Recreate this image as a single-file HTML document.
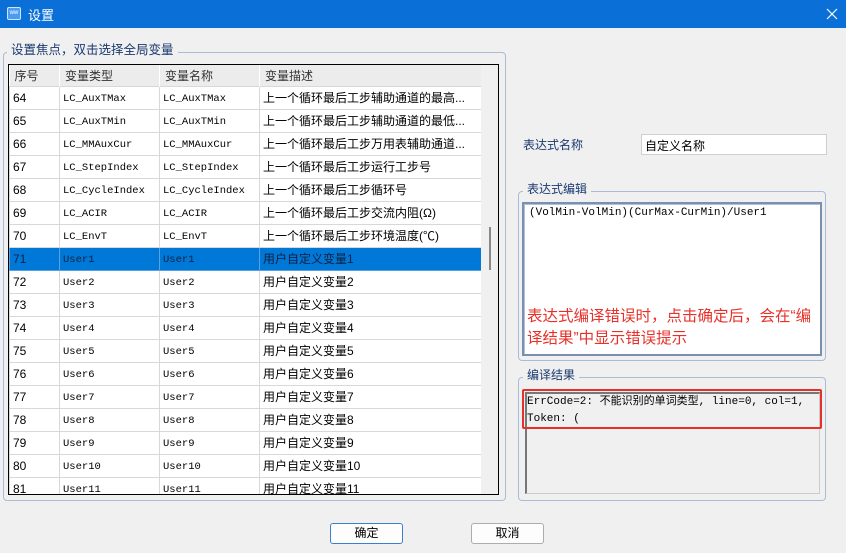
<!DOCTYPE html>
<html><head><meta charset="utf-8"><style>
*{margin:0;padding:0;box-sizing:border-box}
body{width:846px;height:553px;background:#f0f0f0;position:relative;overflow:hidden;font-family:"Liberation Sans","Noto Sans CJK SC",sans-serif;font-size:12px;color:#000}
.a{position:absolute}
.title{left:0;top:0;width:846px;height:28px;background:#0a6fd6;color:#fff}
.grp{border:1px solid #a8bcd8;border-radius:4px}
.lg{background:#f0f0f0;padding:0 4px;color:#1a3a70;font-size:12px}
.mono{font-family:"Liberation Mono","Noto Sans CJK SC",monospace;font-size:11px}
table{border-collapse:collapse;table-layout:fixed}
td{height:23px;border:1px solid #d8d8d8;padding:0 3px;white-space:nowrap;overflow:hidden;background:#fff;vertical-align:top;font-size:12px}
td div{height:22px;line-height:22px;overflow:hidden}
td .m{font-family:"Liberation Mono",monospace;font-size:10.5px;padding-top:3px;line-height:19px}
th{height:21px;background:#ececec;font-weight:normal;text-align:left;padding:0 5px;border-right:1px solid #fff;color:#333}
tr.sel td{background:#0078d7;border-color:#5aa0e0;color:#102040}
.btn{border:1px solid #adadad;border-radius:3px;background:#fdfdfd;text-align:center;line-height:19px;font-size:12px}
</style></head><body>
<div class="a title">
  <div class="a" style="left:7px;top:7px;width:14px;height:13px;border:1px solid #cfe6ff;background:#4b9cf0;border-radius:2px;font-size:6px;line-height:11px;text-align:center;color:#fff">ww</div>
  <div class="a" style="left:28px;top:5px;font-size:13px">设置</div>
  <svg class="a" style="left:826px;top:8px" width="12" height="12"><path d="M1 1L11 11M11 1L1 11" stroke="#fff" stroke-width="1.2"/></svg>
</div>

<div class="a grp" style="left:3px;top:52px;width:503px;height:449px"></div>
<div class="a lg" style="left:7px;top:39px;font-size:12.5px">设置焦点，双击选择全局变量</div>

<div class="a" style="left:8px;top:64px;width:491px;height:431px;border:1px solid #000;background:#fff;overflow:hidden">
<table style="width:473px">
<colgroup><col style="width:50px"><col style="width:100px"><col style="width:100px"><col style="width:223px"></colgroup>
<tr><th>序号</th><th>变量类型</th><th>变量名称</th><th>变量描述</th></tr>
<tr><td><div>64</div></td><td><div class="m">LC_AuxTMax</div></td><td><div class="m">LC_AuxTMax</div></td><td><div>上一个循环最后工步辅助通道的最高...</div></td></tr>
<tr><td><div>65</div></td><td><div class="m">LC_AuxTMin</div></td><td><div class="m">LC_AuxTMin</div></td><td><div>上一个循环最后工步辅助通道的最低...</div></td></tr>
<tr><td><div>66</div></td><td><div class="m">LC_MMAuxCur</div></td><td><div class="m">LC_MMAuxCur</div></td><td><div>上一个循环最后工步万用表辅助通道...</div></td></tr>
<tr><td><div>67</div></td><td><div class="m">LC_StepIndex</div></td><td><div class="m">LC_StepIndex</div></td><td><div>上一个循环最后工步运行工步号</div></td></tr>
<tr><td><div>68</div></td><td><div class="m">LC_CycleIndex</div></td><td><div class="m">LC_CycleIndex</div></td><td><div>上一个循环最后工步循环号</div></td></tr>
<tr><td><div>69</div></td><td><div class="m">LC_ACIR</div></td><td><div class="m">LC_ACIR</div></td><td><div>上一个循环最后工步交流内阻(Ω)</div></td></tr>
<tr><td><div>70</div></td><td><div class="m">LC_EnvT</div></td><td><div class="m">LC_EnvT</div></td><td><div>上一个循环最后工步环境温度(℃)</div></td></tr>
<tr class="sel"><td><div>71</div></td><td><div class="m">User1</div></td><td><div class="m">User1</div></td><td><div>用户自定义变量1</div></td></tr>
<tr><td><div>72</div></td><td><div class="m">User2</div></td><td><div class="m">User2</div></td><td><div>用户自定义变量2</div></td></tr>
<tr><td><div>73</div></td><td><div class="m">User3</div></td><td><div class="m">User3</div></td><td><div>用户自定义变量3</div></td></tr>
<tr><td><div>74</div></td><td><div class="m">User4</div></td><td><div class="m">User4</div></td><td><div>用户自定义变量4</div></td></tr>
<tr><td><div>75</div></td><td><div class="m">User5</div></td><td><div class="m">User5</div></td><td><div>用户自定义变量5</div></td></tr>
<tr><td><div>76</div></td><td><div class="m">User6</div></td><td><div class="m">User6</div></td><td><div>用户自定义变量6</div></td></tr>
<tr><td><div>77</div></td><td><div class="m">User7</div></td><td><div class="m">User7</div></td><td><div>用户自定义变量7</div></td></tr>
<tr><td><div>78</div></td><td><div class="m">User8</div></td><td><div class="m">User8</div></td><td><div>用户自定义变量8</div></td></tr>
<tr><td><div>79</div></td><td><div class="m">User9</div></td><td><div class="m">User9</div></td><td><div>用户自定义变量9</div></td></tr>
<tr><td><div>80</div></td><td><div class="m">User10</div></td><td><div class="m">User10</div></td><td><div>用户自定义变量10</div></td></tr>
<tr><td><div>81</div></td><td><div class="m">User11</div></td><td><div class="m">User11</div></td><td><div>用户自定义变量11</div></td></tr>
</table>
<div class="a" style="left:472px;top:0;width:17px;height:431px;background:#f0f0f0"></div>
<div class="a" style="left:480px;top:162px;width:2px;height:43px;background:#888"></div>
</div>

<div class="a" style="left:523px;top:136px;color:#1a3a70">表达式名称</div>
<div class="a" style="left:641px;top:134px;width:186px;height:21px;background:#fff;border:1px solid #d0d0d0;padding:2px 3px">自定义名称</div>

<div class="a grp" style="left:518px;top:191px;width:308px;height:170px"></div>
<div class="a lg" style="left:523px;top:180px">表达式编辑</div>
<div class="a" style="left:522px;top:202px;width:300px;height:154px;background:#fff;border:2px solid #7a90b0;box-shadow:inset 1px 1px 0 #b0c0d8"></div>
<div class="a mono" style="left:529px;top:207px">(VolMin-VolMin)(CurMax-CurMin)/User1</div>
<div class="a" style="left:527px;top:306px;width:320px;color:#e8302a;font-size:15.5px;line-height:22px;white-space:nowrap">表达式编译错误时，点击确定后，会在“编<br>译结果”中显示错误提示</div>

<div class="a grp" style="left:518px;top:377px;width:308px;height:124px"></div>
<div class="a lg" style="left:523px;top:366px">编译结果</div>
<div class="a" style="left:525px;top:392px;width:295px;height:102px;background:#f0f0f0;border:1px solid #ccc;border-left:2px solid #777;border-top:2px solid #777"></div>
<div class="a" style="left:522px;top:389px;width:300px;height:40px;border:2px solid #e8302a;border-radius:2px"></div>
<div class="a mono" style="left:527px;top:394px;line-height:17px">ErrCode=2: 不能识别的单词类型, line=0, col=1,<br>Token: (</div>

<div class="a btn" style="left:330px;top:523px;width:73px;height:21px;border-color:#3a7fd0">确定</div>
<div class="a btn" style="left:471px;top:523px;width:73px;height:21px">取消</div>
</body></html>
